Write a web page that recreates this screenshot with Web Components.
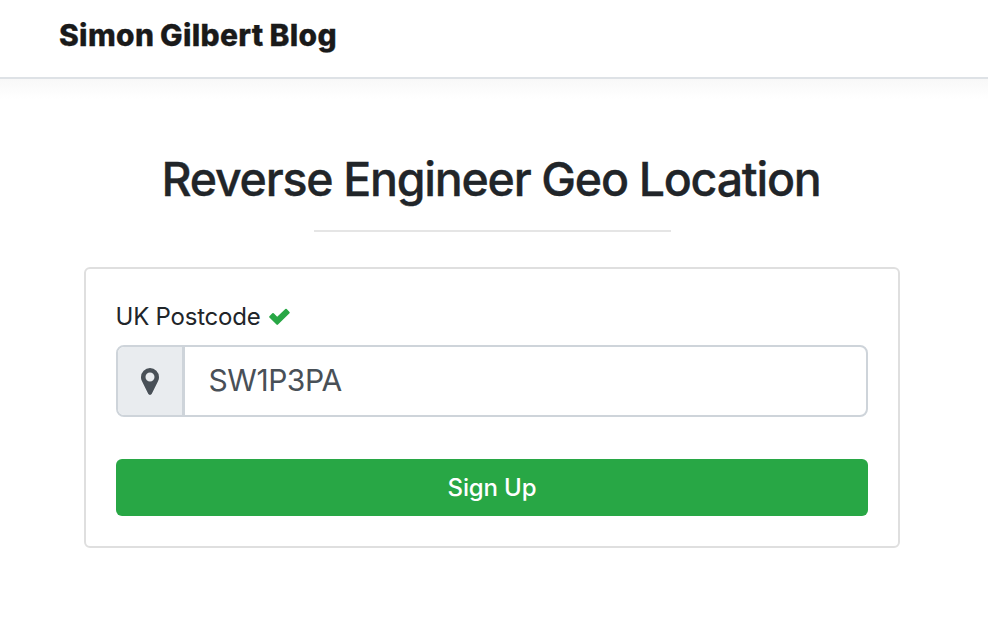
<!DOCTYPE html>
<html lang="en"><head><meta charset="utf-8"><title>Simon Gilbert Blog</title>
<style>body{margin:0;background:#fff;color:#212529;font-family:Inter,"Liberation Sans",sans-serif}</style></head><body>
<blog-page></blog-page>
<script>
const define=(name,html)=>customElements.define(name,class extends HTMLElement{constructor(){super();this.attachShadow({mode:'open'}).innerHTML=html}});
define('blog-header',`<style>:host{display:block}header{box-sizing:border-box;height:79px;padding:16px 59px 0;border-bottom:2px solid #dee2e6;font-size:30px;line-height:38px;font-weight:800;color:#1a1a1a}span{letter-spacing:.3px;word-spacing:-1px;-webkit-text-stroke:.3px #1a1a1a;white-space:nowrap}div{height:20px;margin-bottom:-20px;background:linear-gradient(#f8f8f8,#fff)}</style><header><span><slot></slot></span></header><div></div>`);
define('page-title',`<style>:host{display:flex;flex-direction:column;align-items:center;padding-top:71px}h1{margin:0;font-size:46.500px;line-height:58px;font-weight:500;-webkit-text-stroke:.35px #212529;letter-spacing:-1.230px;word-spacing:-.3px;white-space:nowrap;padding-right:2px}div{width:357px;height:2px;margin-top:22px;background:#e5e5e5}</style><h1><slot></slot></h1><div></div>`);
define('field-label',`<style>:host{display:flex;align-items:center;gap:9px;height:36px;font-size:24px;line-height:36px}svg{width:22px;height:18px}span{white-space:nowrap;letter-spacing:-.22px;margin-left:-.5px}</style><span><slot></slot></span><svg viewBox="0 0 22 18"><path d="M.4 8.200L3.300 5.200Q4 4.600 4.700 5.200L8.200 8.800 16.300 1Q17 .4 17.700 1L20.500 3.900Q21 4.600 20.500 5.200L9 16.600Q8.200 17.200 7.500 16.600L.4 9.600Q-.1 8.900 .4 8.200Z" fill="#28a745"/></svg>`);
define('postcode-field',`<style>:host{display:flex;box-sizing:border-box;height:72px;border:2px solid #ced4da;border-radius:8px;overflow:hidden;margin-top:10px}i{display:flex;align-items:center;justify-content:center;width:64px;border-right:3px solid #ced4da;background:#e9ecef;box-sizing:content-box}span{padding-left:23.500px;font-size:30px;line-height:67px;letter-spacing:-.45px;color:#495057}</style><i><svg width="18" height="27" viewBox="0 0 18 27"><path fill="#495057" fill-rule="evenodd" d="M9 0a9 9 0 0 0-9 9c0 2 .4 3 1 4.300l6.200 12.500a2 2 0 0 0 3.600 0L17 13.300c.6-1.300 1-2.300 1-4.300a9 9 0 0 0-9-9zm0 4.500a4.500 4.500 0 1 1 0 9 4.500 4.500 0 0 1 0-9z"/></svg></i><span><slot></slot></span>`);
define('submit-button',`<style>:host{display:block;margin-top:42px}button{display:block;width:100%;height:57px;border:0;border-radius:6px;background:#28a745;color:#fff;font:450 24px/57px Inter,sans-serif;letter-spacing:-.15px;padding:0}</style><button><slot></slot></button>`);
define('form-card',`<style>:host{display:block;box-sizing:border-box;width:816px;height:281px;border:2px solid #dfdfdf;border-radius:6px;padding:30px;margin:35px 0 0 84px}</style><slot></slot>`);
define('blog-page',`<style>:host{display:block;height:632px;overflow:hidden}page-title{width:984px}</style><blog-header>Simon Gilbert Blog</blog-header><page-title>Reverse Engineer Geo Location</page-title><form-card><field-label>UK Postcode</field-label><postcode-field>SW1P3PA</postcode-field><submit-button>Sign Up</submit-button></form-card>`);
</script></body></html>
